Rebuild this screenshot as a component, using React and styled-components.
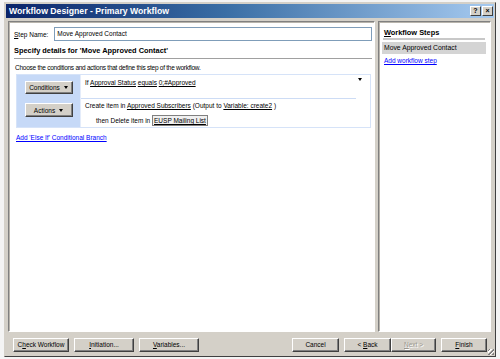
import React from 'react';
import styled, { createGlobalStyle } from 'styled-components';

const Global = createGlobalStyle`
  html, body {
    margin: 0;
    padding: 0;
    background: #f4f4f4;
  }
  body {
    font-family: "Liberation Sans", Arial, sans-serif;
    font-size: 6.5px;
    color: #000;
  }
`;

const Window = styled.div`
  margin: 2px 0 0 4px;
  width: 490px;
  height: 353px;
  border: 1px solid #404040;
  border-top-color: #d4d0c8;
  border-left-color: #d4d0c8;
  background: #d4d0c8;
  display: flex;
  flex-direction: column;
`;

const TitleBar = styled.div`
  height: 14px;
  margin: 1px 1px 0 1px;
  background: linear-gradient(to right, #0a246a 0%, #3a6ea5 45%, #a6caf0 100%);
  display: flex;
  align-items: center;
  padding: 0 1px 0 3px;
`;

const Title = styled.div`
  flex: 1;
  color: #fff;
  font-weight: bold;
  font-size: 8.7px;
`;

const CapButton = styled.div`
  width: 9px;
  height: 8px;
  margin-left: 1px;
  background: #d4d0c8;
  border: 1px solid;
  border-color: #fff #404040 #404040 #fff;
  font-size: 7px;
  font-weight: bold;
  line-height: 8px;
  text-align: center;
  color: #000;
`;

const Body = styled.div`
  flex: 1;
  display: flex;
  gap: 3px;
  padding: 3px 4px 0 3px;
  min-height: 0;
`;

const Panel = styled.div`
  background: #fff;
  border: 1px solid;
  border-color: #808080 #fff #fff #808080;
  box-shadow: inset 1px 1px 0 #b8b4ac;
  ${p => (p.$side ? 'width: 105px; flex: none;' : 'flex: 1;')}
  padding: ${p => (p.$side ? '6px 3px' : '5px 1px 0 5px')};
  display: flex;
  flex-direction: column;
`;

const NameRow = styled.div`
  display: flex;
  align-items: center;
  gap: 6px;
  padding-right: 1px;
`;

const Field = styled.div`
  flex: 1;
  height: 12px;
  border: 1px solid #7f9db9;
  padding-left: 2px;
  line-height: 12px;
`;

const Heading = styled.div`
  font-weight: bold;
  font-size: 7.4px;
  margin-top: 5px;
  padding-bottom: 3px;
  border-bottom: 1px solid #a0a0a0;
  margin-right: 1px;
`;

const Hint = styled.div`
  margin-top: 5px;
  padding-left: 1px;
  letter-spacing: -0.26px;
`;

const Block = styled.div`
  margin: 3px 2px 0 2px;
  height: 52px;
  display: grid;
  grid-template-columns: 63px 1fr;
  border: 1px solid #d6e3f8;
`;

const Buttons = styled.div`
  background: #c6d9f7;
  display: flex;
  flex-direction: column;
  align-items: center;
  gap: 9px;
  padding-top: 6px;
`;

const Btn = styled.div`
  width: ${p => p.$w || 46}px;
  height: ${p => p.$h || 14}px;
  flex: none;
  background: #d4d0c8;
  border: 1px solid;
  border-color: #fff #404040 #404040 #fff;
  box-shadow: inset -1px -1px 0 #808080;
  display: flex;
  align-items: center;
  justify-content: center;
  gap: 4px;
  white-space: nowrap;
  color: ${p => (p.$off ? '#9a978f' : '#000')};
  text-shadow: ${p => (p.$off ? '1px 1px 0 #fff' : 'none')};
  box-sizing: border-box;
`;

const Caret = styled.span`
  width: 0;
  height: 0;
  border-left: 2.5px solid transparent;
  border-right: 2.5px solid transparent;
  border-top: 3px solid #000;
`;

const Steps = styled.div`
  position: relative;
  padding: 2px 0 0 4px;
  border-left: 1px solid #e4ecfa;
`;

const Line = styled.div`
  padding-left: ${p => p.$indent || 0}px;
  margin-top: ${p => p.$mt || 0}px;
  height: 12px;
  line-height: 12px;
  white-space: pre;
`;

const Rule = styled.div`
  height: 1px;
  margin: 9px 14px 0 -4px;
  background: #cddcf5;
`;

const U = styled.span`
  text-decoration: underline;
`;

const Boxed = styled.span`
  text-decoration: underline;
  border: 1px solid #808080;
  background: #f0f0f0;
  padding: 1px 1px;
`;

const DropArrow = styled.span`
  position: absolute;
  right: 8px;
  top: 3px;
  width: 0;
  height: 0;
  border-left: 2.5px solid transparent;
  border-right: 2.5px solid transparent;
  border-top: 3px solid #000;
`;

const Link = styled.div`
  color: #0000ff;
  text-decoration: underline;
  margin-top: ${p => p.$mt || 0}px;
  padding-left: ${p => p.$pl || 0}px;
`;

const SideHead = styled.div`
  font-weight: bold;
  font-size: 7.4px;
  padding: 0 2px 1px 1px;
  border-bottom: 2px solid #c8c8c8;
  margin: 0 2px 2px 1px;
`;

const StepItem = styled.div`
  background: #d4d4d4;
  height: 12px;
  line-height: 12px;
  padding-left: 2px;
  margin-right: 1px;
  font-size: 6.8px;
`;

const Footer = styled.div`
  height: 23px;
  display: flex;
  align-items: center;
  padding: 1px 3px 0 8px;
  gap: 5px;
`;

const Spacer = styled.div`
  flex: 1;
`;

const Pair = styled.div`
  display: flex;
`;

const Grip = styled.div`
  align-self: flex-end;
  width: 6px;
  height: 6px;
  margin: 0 -2px 1px -4px;
  background: repeating-linear-gradient(135deg, transparent 0 1px, #808080 1px 2px, #fff 2px 3px);
`;

export default function App() {
  return (
    <>
      <Global />
      <Window>
        <TitleBar>
          <Title>Workflow Designer - Primary Workflow</Title>
          <CapButton>?</CapButton>
          <CapButton>×</CapButton>
        </TitleBar>
        <Body>
          <Panel>
            <NameRow>
              <span><u>S</u>tep Name:</span>
              <Field>Move Approved Contact</Field>
            </NameRow>
            <Heading>Specify details for 'Move Approved Contact'</Heading>
            <Hint>Choose the conditions and actions that define this step of the workflow.</Hint>
            <Block>
              <Buttons>
                <Btn $w={48} $h={13}>Conditions <Caret /></Btn>
                <Btn $w={48} $h={14}>Actions <Caret /></Btn>
              </Buttons>
              <Steps>
                <DropArrow />
                <Line>If <U>Approval Status</U> <U>equals</U> <U>0;#Approved</U></Line>
                <Rule />
                <Line $mt={1}>Create item in <U>Approved Subscribers</U> (Output to <U>Variable: create2</U> )</Line>
                <Line $mt={3} $indent={11}>then Delete item in <Boxed>EUSP Mailing List</Boxed></Line>
              </Steps>
            </Block>
            <Link $mt={6} $pl={2}>Add 'Else If' Conditional Branch</Link>
          </Panel>
          <Panel $side>
            <SideHead><u>W</u>orkflow Steps</SideHead>
            <StepItem>Move Approved Contact</StepItem>
            <Link $mt={3} $pl={2}>Add workflow step</Link>
          </Panel>
        </Body>
        <Footer>
          <Btn $w={56}><span>C<u>h</u>eck Workflow</span></Btn>
          <Btn $w={60}><span><u>I</u>nitiation...</span></Btn>
          <Btn $w={60}><span><u>V</u>ariables...</span></Btn>
          <Spacer />
          <Btn $w={47}>Cancel</Btn>
          <Pair>
            <Btn $w={47}><span>&lt; <u>B</u>ack</span></Btn>
            <Btn $w={45} $off><span><u>N</u>ext &gt;</span></Btn>
          </Pair>
          <Btn $w={46}><span><u>F</u>inish</span></Btn>
          <Grip />
        </Footer>
      </Window>
    </>
  );
}
